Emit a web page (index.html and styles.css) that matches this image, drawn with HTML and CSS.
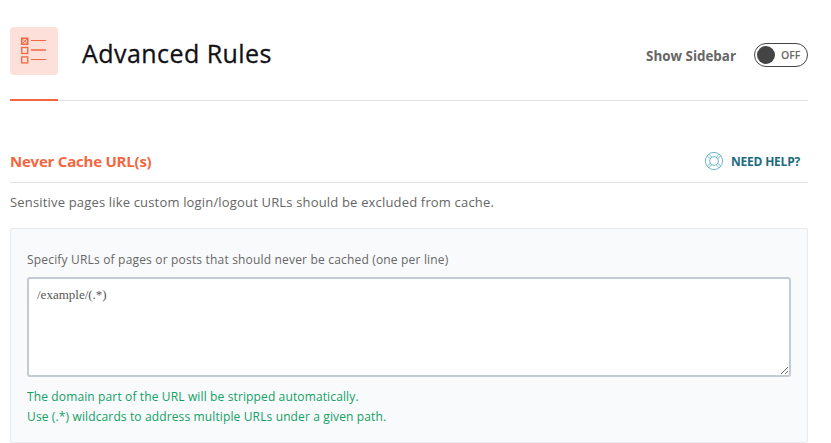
FILE: index.html
```html
<!DOCTYPE html>
<html lang="en">
<head>
<meta charset="UTF-8">
<title>Advanced Rules</title>
<link rel="stylesheet" href="styles.css">
</head>
<body>

<header class="header">
    <div class="header-icon">
        <svg width="48" height="48" viewBox="0 0 48 48" fill="none" stroke="#f56640">
            <rect x="11.75" y="11.2" width="6" height="6" stroke-width="1.5"/>
            <path d="M12.5 12l4.5 4.5M17 12l-4.5 4.5"/>
            <rect x="11.75" y="20.5" width="6" height="6" stroke-width="1.3"/>
            <rect x="11.75" y="29.9" width="6" height="6" stroke-width="1.3"/>
            <path d="M21 13.5h15M21 32.5h15"/>
            <path d="M21 23h15" stroke-width="1.3"/>
        </svg>
    </div>
    <h1>Advanced Rules</h1>
    <div class="sidebar-switch">
        <span class="switch-label">Show Sidebar</span>
        <div class="switch"><i class="knob"></i><span>OFF</span></div>
    </div>
</header>

<main>
    <div class="section-head">
        <h2>Never Cache URL(s)</h2>
        <a class="help">
            <svg width="20" height="20" viewBox="0 0 20 20" fill="none" stroke="#4ba3bd" stroke-width=".8">
                <circle cx="10" cy="10" r="8.6"/>
                <circle cx="10" cy="10" r="4.3"/>
                <path d="M4.8 3.2l3 3.1M3.2 4.8l3.1 3M15.2 3.2l-3 3.1M16.8 4.8l-3.1 3M4.8 16.8l3-3.1M3.2 15.2l3.1-3M15.2 16.8l-3-3.1M16.8 15.2l-3.1-3"/>
            </svg>
            <span>NEED HELP?</span>
        </a>
    </div>
    <p class="description">Sensitive pages like custom login/logout URLs should be excluded from cache.</p>

    <div class="field">
        <label for="urls">Specify URLs of pages or posts that should never be cached (one per line)</label>
        <textarea id="urls" spellcheck="false">/example/(.*)</textarea>
        <p class="note">The domain part of the URL will be stripped automatically.<br>Use (.*) wildcards to address multiple URLs under a given path.</p>
    </div>
</main>

</body>
</html>
```
FILE: styles.css
```css
* {
    box-sizing: border-box;
}

body {
    margin: 0;
    padding: 27px 23px 0 10px;
    background: #fff;
    color: #666;
    font-family: "Open Sans", "Noto Sans", sans-serif;
    font-size: 13px;
    overflow: hidden;
}

h1, h2, p {
    margin: 0;
}

/* Page header */
.header {
    display: flex;
    height: 74px;
    border-bottom: 1px solid #e0e4e9;
}

.header-icon {
    width: 48px;
    height: 74px;
    border-bottom: 2px solid #f56640;
}

.header-icon svg {
    display: block;
    border-radius: 4px;
    background: #fde0d9;
}

h1 {
    margin-left: 24px;
    font-size: 25px;
    font-weight: 500;
    line-height: 52px;
    letter-spacing: .45px;
    color: #121116;
    -webkit-text-stroke: .3px #121116;
}

.sidebar-switch {
    display: flex;
    align-items: center;
    height: 56px;
    margin-left: auto;
    gap: 18px;
}

.switch-label {
    padding-top: 2px;
    font-weight: 700;
    font-size: 13.4px;
}

.switch {
    display: flex;
    align-items: center;
    width: 54px;
    height: 24px;
    padding-left: 2px;
    border: 1px solid #444;
    border-radius: 12px;
    font-size: 10.5px;
    font-weight: 600;
}

.knob {
    width: 18px;
    height: 18px;
    margin-right: 6px;
    border-radius: 50%;
    background: #444;
}

/* Section */
.section-head {
    display: flex;
    justify-content: space-between;
    align-items: center;
    height: 43px;
    margin-top: 39px;
    border-bottom: 1px solid #e0e4e9;
}

h2 {
    font-size: 15px;
    font-weight: 700;
    letter-spacing: -.22px;
    color: #f56640;
}

.help {
    display: flex;
    align-items: center;
    gap: 7px;
    padding-right: 8px;
    font-size: 12px;
    font-weight: 700;
    letter-spacing: -.22px;
    color: #1c6b7d;
}

.description {
    margin-top: 9px;
    line-height: 20px;
    font-size: 13px;
    letter-spacing: .17px;
}

.field {
    height: 215px;
    margin-top: 16px;
    padding: 21px 16px 0;
    border: 1px solid #e8ebee;
    border-radius: 2px;
    background: #f9fafb;
}

label {
    display: block;
    font-size: 12px;
    line-height: 20px;
    letter-spacing: .18px;
}

textarea {
    display: block;
    width: 100%;
    height: 100px;
    margin-top: 7px;
    padding: 8px 8px;
    border: 2px solid #c2cad4;
    border-radius: 3px;
    background: #fff;
    color: #555;
    font: 13px/16px "Liberation Serif", serif;
}

.note {
    margin-top: 10px;
    font-size: 12px;
    line-height: 20px;
    letter-spacing: .13px;
    color: #11a066;
}
```
